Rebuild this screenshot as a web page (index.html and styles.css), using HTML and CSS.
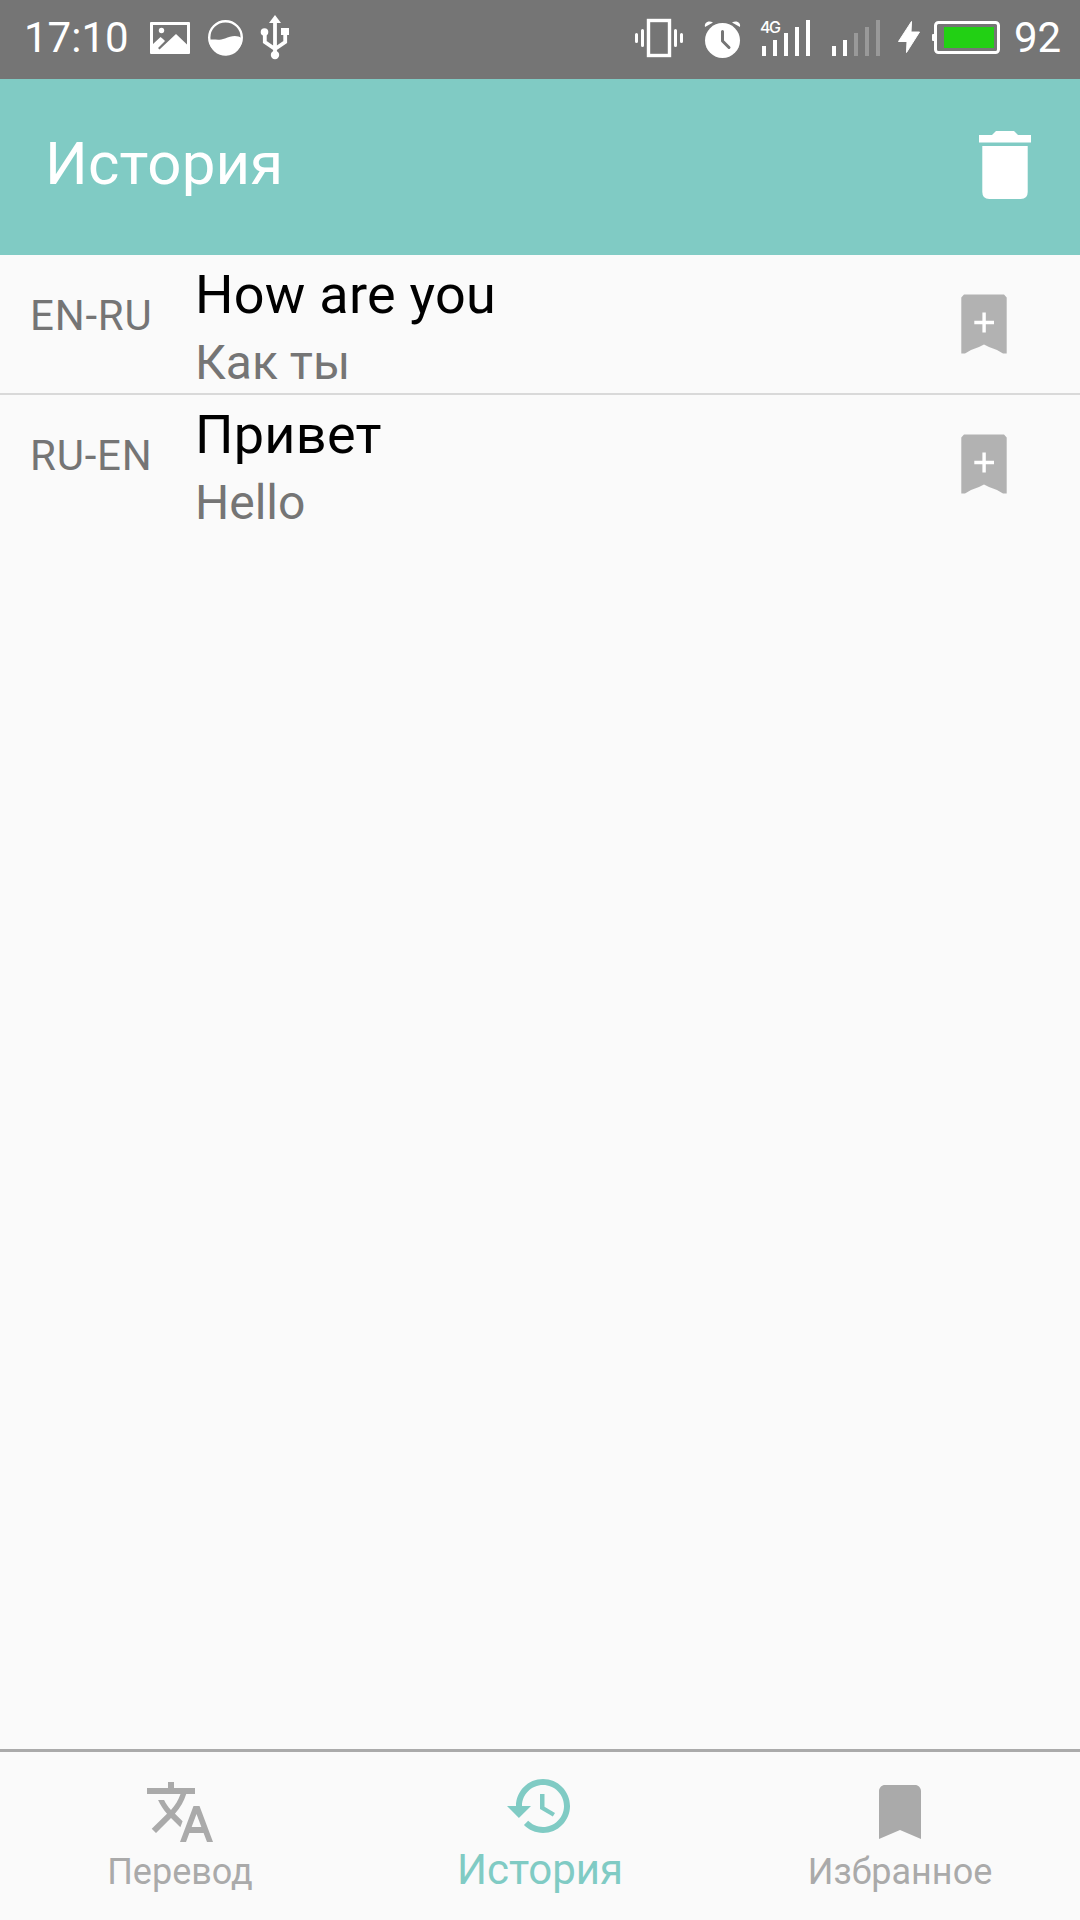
FILE: index.html
```html
<!DOCTYPE html>
<html lang="ru">
<head>
<meta charset="utf-8">
<title>История</title>
<link rel="stylesheet" href="styles.css">
</head>
<body>
<div class="app">
  <div class="status">
    <div class="status-group">
      <span class="clock">17:10</span>
      <svg width="44" height="79" viewBox="148 0 44 79"><path fill="#fff" fill-rule="evenodd" d="M151 22H189Q190 22 190 23V53Q190 54 189 54H151Q150 54 150 53V23Q150 22 151 22ZM153 25V44L160.500 37L163 39L165 41L158 48L159.500 49.500L176 34L187 44.500V25Z"/><circle cx="161.500" cy="30.500" r="2.700" fill="#fff"/></svg>
      <svg width="38" height="79" viewBox="207 0 38 79"><circle cx="225.500" cy="37.500" r="16.300" fill="none" stroke="#fff" stroke-width="2.400"/><path fill="#fff" d="M209 40C214 38.500 218 41 225 38.500C231 36 237 34.500 242 38.500A16.500 16.500 0 0 1 209 40Z"/></svg>
      <svg width="32" height="79" viewBox="260 0 32 79"><path fill="#fff" d="M275 15L281 23H269ZM281 28H289V35H281Z"/><circle cx="264.500" cy="32" r="3.800" fill="#fff"/><circle cx="275" cy="55" r="4.200" fill="#fff"/><path fill="none" stroke="#fff" stroke-width="3.800" d="M275 21V55M264.800 32V42L275 49L285.200 42V32"/></svg>
    </div>
    <div class="status-group">
      <svg width="50" height="79" viewBox="634 0 50 79"><rect x="648.500" y="20.500" width="21" height="35" fill="none" stroke="#fff" stroke-width="3.400"/><path stroke="#fff" stroke-width="3" stroke-linecap="round" d="M642.500 30.500V45.500M636.500 34.500V41.500M675.500 30.500V45.500M681.500 34.500V41.500"/></svg>
      <svg width="38" height="79" viewBox="703 0 38 79"><circle cx="722.500" cy="40.500" r="17.500" fill="#fff"/><path fill="#fff" d="M705 27C704 23 708 20 713 22.500ZM740 27C741 23 737 20 732 22.500Z"/><path fill="none" stroke="#757575" stroke-width="3" stroke-linecap="round" stroke-linejoin="round" d="M722.500 31.500V41L729 47.500"/></svg>
      <svg width="52" height="79" viewBox="760 0 52 79"><text class="net" x="760" y="33" textLength="21">4G</text><path class="bar" d="M764 46V56M775 40V56M786 33V56M797 27V56M808 20V56"/></svg>
      <svg width="50" height="79" viewBox="831 0 50 79"><path class="bar" d="M834 46V56M845 40V56"/><path class="bar dim" d="M856 33V56M867 27V56M878 20V56"/></svg>
      <svg class="bolt" width="24" height="79" viewBox="897 0 24 79"><path fill="#fff" stroke="#fff" stroke-linejoin="round" d="M911.500 21.500L898.500 41.500H907L906.500 52.500L919.500 32H911Z"/></svg>
      <svg width="70" height="79" viewBox="931 0 70 79"><rect x="935.500" y="22.500" width="63" height="30" rx="3" fill="none" stroke="#fff" stroke-width="3"/><rect x="932" y="34" width="4" height="7" rx="1" fill="#fff"/><rect x="944" y="27" width="50" height="21" fill="#22d014"/></svg>
      <span class="percent">92</span>
    </div>
  </div>

  <header class="toolbar">
    <h1 class="toolbar-title">История</h1>
    <svg width="52" height="68" viewBox="979 131 52 68"><path fill="#fff" d="M996 131H1014L1018 135H1031V142.500H979V135H992ZM982.300 146H1027.700V192Q1027.700 199 1020.700 199H989.300Q982.300 199 982.300 192Z"/></svg>
  </header>

  <main class="list">
    <div class="row">
      <span class="lang">EN-RU</span>
      <div class="texts"><div class="source">How are you</div><div class="result">Как ты</div></div>
      <svg class="save" width="46" height="60" viewBox="0 0 46 60"><path fill="#b2b2b2" d="M3 .5H43L45.700 3.500V59.500H42L36 56L28 53L23 50.500L18 53L10 56L4 59.500H.3V3.500Z"/><path stroke="#fff" stroke-width="3.400" d="M13.300 28.500H33M23.100 18.500V38.500"/></svg>
    </div>
    <div class="row">
      <span class="lang">RU-EN</span>
      <div class="texts"><div class="source">Привет</div><div class="result">Hello</div></div>
      <svg class="save" width="46" height="60" viewBox="0 0 46 60"><path fill="#b2b2b2" d="M3 .5H43L45.700 3.500V59.500H42L36 56L28 53L23 50.500L18 53L10 56L4 59.500H.3V3.500Z"/><path stroke="#fff" stroke-width="3.400" d="M13.300 28.500H33M23.100 18.500V38.500"/></svg>
    </div>
  </main>

  <nav class="tabs">
    <div class="tab">
      <svg width="72" height="72" viewBox="0 0 24 24" fill="currentColor"><path d="M12.870 15.070l-2.540-2.510.03-.03c1.740-1.940 2.980-4.170 3.710-6.530H17V4h-7V2H8v2H1v1.990h11.170C11.500 7.920 10.440 9.750 9 11.350 8.070 10.320 7.300 9.190 6.690 8h-2c.73 1.630 1.730 3.170 2.980 4.560l-5.090 5.020L4 19l5-5 3.110 3.110.76-2.040zM18.500 10h-2L12 22h2l1.120-3h4.750L21 22h2l-4.500-12zm-2.620 7l1.620-4.330L19.120 17h-3.240z"/></svg>
      <span>Перевод</span>
    </div>
    <div class="tab active">
      <svg width="72" height="72" viewBox="0 0 24 24" fill="currentColor"><path d="M13 3c-4.970 0-9 4.030-9 9H1l3.890 3.890.07.14L9 12H6c0-3.870 3.130-7 7-7s7 3.130 7 7-3.130 7-7 7c-1.930 0-3.680-.79-4.940-2.060l-1.420 1.420C8.270 19.990 10.510 21 13 21c4.970 0 9-4.030 9-9s-4.030-9-9-9zm-1 5v5l4.280 2.540.72-1.210-3.500-2.080V8H12z"/></svg>
      <span>История</span>
    </div>
    <div class="tab">
      <svg width="72" height="72" viewBox="0 0 24 24" fill="currentColor"><path d="M17 3H7c-1.100 0-1.990.9-1.990 2L5 21l7-3 7 3V5c0-1.100-.9-2-2-2z"/></svg>
      <span>Избранное</span>
    </div>
  </nav>
</div>
</body>
</html>
```
FILE: styles.css
```css
* { box-sizing: border-box; }
body {
  margin: 0;
  font-family: Roboto, sans-serif;
  background: #fafafa;
}
svg { display: block; flex: none; }
.app {
  display: flex;
  flex-direction: column;
  width: 1080px;
  height: 1920px;
}
.status {
  display: flex;
  justify-content: space-between;
  height: 79px;
  padding: 0 19px 0 24px;
  background: #757575;
  color: #fff;
  font-size: 42px;
  line-height: 76px;
}
.status-group { display: flex; }
.status-group:first-child { gap: 15px; }
.clock { width: 109px; }
.status-group:last-child { gap: 19px; }
.bolt { margin: 0 -9px 0 -3px; }
.percent {
  width: 48px;
  margin-left: -7px;
  text-indent: 1px;
}
.net {
  font: 500 16px Inter, sans-serif;
  fill: #fff;
}
.bar {
  stroke: #fff;
  stroke-width: 4;
}
.dim { stroke: #999; }
.toolbar {
  display: flex;
  justify-content: space-between;
  align-items: flex-start;
  height: 176px;
  padding: 52px 49px 0 45px;
  background: #80cbc4;
  color: #fff;
}
.toolbar-title {
  margin: -3px 0 0;
  font-size: 60px;
  font-weight: 400;
  line-height: 72px;
  letter-spacing: .15px;
}
.list { flex: 1; }
.row {
  display: flex;
  align-items: flex-start;
  height: 140px;
  padding-right: 73px;
}
.row:not(:last-child) { border-bottom: 2px solid #d9d9d9; }
.lang {
  width: 195px;
  padding: 36px 0 0 30px;
  font-size: 42px;
  line-height: 50px;
  letter-spacing: .8px;
  color: #757575;
}
.texts { flex: 1; padding-top: 8px; }
.source {
  font-size: 54px;
  line-height: 64px;
  letter-spacing: .25px;
  color: #000;
}
.result {
  margin-top: 8px;
  font-size: 48px;
  line-height: 56px;
  color: #757575;
}
.save { margin-top: 39px; }
.tabs {
  display: grid;
  grid-template-columns: repeat(3, 1fr);
  height: 171px;
  border-top: 3px solid #aaa;
}
.tab {
  display: flex;
  flex-direction: column;
  align-items: center;
  gap: 2px;
  padding-top: 24px;
  color: #aaa;
  font-size: 36px;
  line-height: 44px;
}
.active {
  gap: 3px;
  padding-top: 18px;
  color: #80cbc4;
  font-size: 42px;
  line-height: 50px;
}
```
